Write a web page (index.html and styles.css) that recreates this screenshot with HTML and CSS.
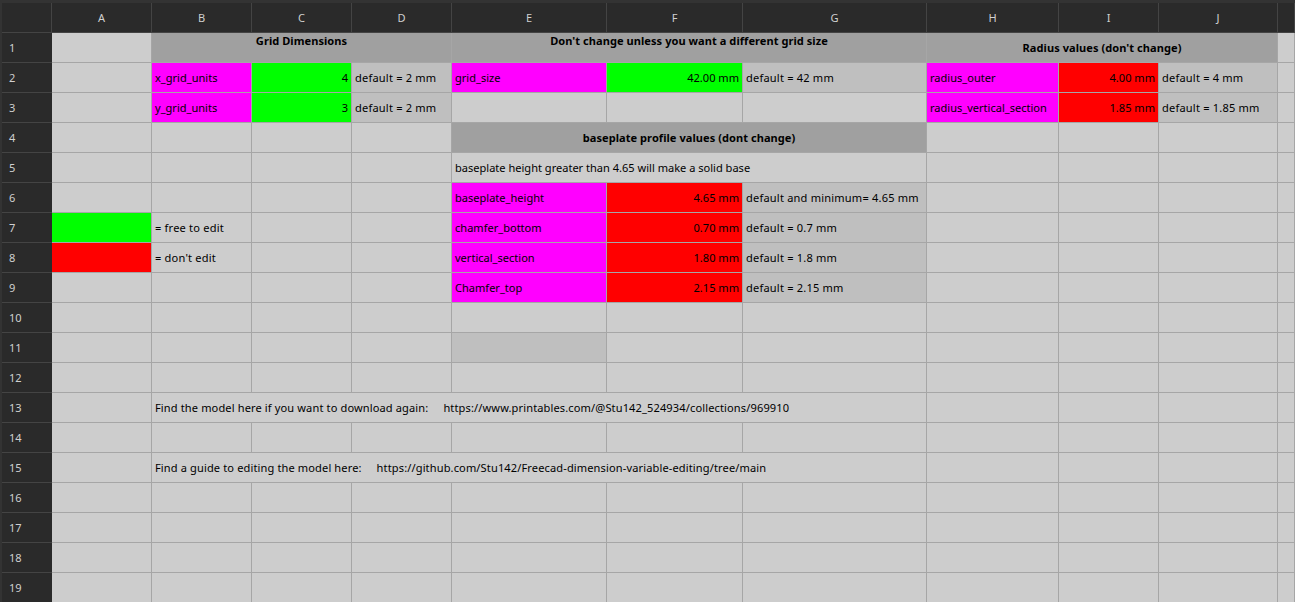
FILE: index.html
```html
<!DOCTYPE html>
<html lang="en">
<head>
<meta charset="utf-8">
<title>Spreadsheet</title>
<link rel="stylesheet" href="styles.css">
</head>
<body>
<div class="sheet">
<table class="grid">
<colgroup>
<col class="w-head"><col class="w-100"><col class="w-100"><col class="w-100"><col class="w-100"><col class="w-e"><col class="w-f"><col class="w-g"><col class="w-h"><col class="w-100"><col class="w-j"><col class="w-k">
</colgroup>
<thead>
<tr><th class="corner"></th><th>A</th><th>B</th><th>C</th><th>D</th><th>E</th><th>F</th><th>G</th><th>H</th><th>I</th><th>J</th><th></th></tr>
</thead>
<tbody>
<tr><th>1</th><td></td><td colspan="3" class="title top">Grid Dimensions</td><td colspan="3" class="title top">Don't change unless you want a different grid size</td><td colspan="3" class="title">Radius values (don't change)</td><td></td></tr>
<tr><th>2</th><td></td><td class="name">x_grid_units</td><td class="free num">4</td><td class="note">default = 2 mm</td><td class="name">grid_size</td><td class="free num">42.00 mm</td><td class="note">default = 42 mm</td><td class="name">radius_outer</td><td class="lock num">4.00 mm</td><td class="note">default = 4 mm</td><td></td></tr>
<tr><th>3</th><td></td><td class="name">y_grid_units</td><td class="free num">3</td><td class="note">default = 2 mm</td><td></td><td></td><td></td><td class="name">radius_vertical_section</td><td class="lock num">1.85 mm</td><td class="note">default = 1.85 mm</td><td></td></tr>
<tr><th>4</th><td></td><td></td><td></td><td></td><td colspan="3" class="title">baseplate profile values (dont change)</td><td></td><td></td><td></td><td></td></tr>
<tr><th>5</th><td></td><td></td><td></td><td></td><td colspan="3">baseplate height greater than 4.65 will make a solid base</td><td></td><td></td><td></td><td></td></tr>
<tr><th>6</th><td></td><td></td><td></td><td></td><td class="name">baseplate_height</td><td class="lock num">4.65 mm</td><td class="note">default and minimum= 4.65 mm</td><td></td><td></td><td></td><td></td></tr>
<tr><th>7</th><td class="free"></td><td class="legend">= free to edit</td><td></td><td></td><td class="name">chamfer_bottom</td><td class="lock num">0.70 mm</td><td class="note">default = 0.7 mm</td><td></td><td></td><td></td><td></td></tr>
<tr><th>8</th><td class="lock"></td><td class="legend">= don't edit</td><td></td><td></td><td class="name">vertical_section</td><td class="lock num">1.80 mm</td><td class="note">default = 1.8 mm</td><td></td><td></td><td></td><td></td></tr>
<tr><th>9</th><td></td><td></td><td></td><td></td><td class="name">Chamfer_top</td><td class="lock num">2.15 mm</td><td class="note">default = 2.15 mm</td><td></td><td></td><td></td><td></td></tr>
<tr><th>10</th><td></td><td></td><td></td><td></td><td></td><td></td><td></td><td></td><td></td><td></td><td></td></tr>
<tr><th>11</th><td></td><td></td><td></td><td></td><td class="note"></td><td></td><td></td><td></td><td></td><td></td><td></td></tr>
<tr><th>12</th><td></td><td></td><td></td><td></td><td></td><td></td><td></td><td></td><td></td><td></td><td></td></tr>
<tr><th>13</th><td></td><td colspan="6" class="pre">Find the model here if you want to download again:     https://www.printables.com/@Stu142_524934/collections/969910</td><td></td><td></td><td></td><td></td></tr>
<tr><th>14</th><td></td><td></td><td></td><td></td><td></td><td></td><td></td><td></td><td></td><td></td><td></td></tr>
<tr><th>15</th><td></td><td colspan="6" class="pre">Find a guide to editing the model here:     https://github.com/Stu142/Freecad-dimension-variable-editing/tree/main</td><td></td><td></td><td></td><td></td></tr>
<tr><th>16</th><td></td><td></td><td></td><td></td><td></td><td></td><td></td><td></td><td></td><td></td><td></td></tr>
<tr><th>17</th><td></td><td></td><td></td><td></td><td></td><td></td><td></td><td></td><td></td><td></td><td></td></tr>
<tr><th>18</th><td></td><td></td><td></td><td></td><td></td><td></td><td></td><td></td><td></td><td></td><td></td></tr>
<tr><th>19</th><td></td><td></td><td></td><td></td><td></td><td></td><td></td><td></td><td></td><td></td><td></td></tr>
</tbody>
</table>
</div>
</body>
</html>
```
FILE: styles.css
```css
* { box-sizing: border-box; }
html, body { margin: 0; height: 100%; overflow: hidden; background: #333333; }
.sheet { padding: 3px 0 0 2px; height: 602px; overflow: hidden; }
.grid {
  table-layout: fixed;
  border-collapse: separate;
  border-spacing: 0;
  width: 1293px;
  font: 11.06px/16px "Noto Sans", sans-serif;
  color: #000;
}
.w-head { width: 50px; }
.w-100 { width: 100px; }
.w-e { width: 155px; }
.w-f { width: 136px; }
.w-g { width: 184px; }
.w-h { width: 132px; }
.w-j { width: 119px; }
.w-k { width: 17px; }
tr { height: 30px; }
th {
  background: #2a2a2a;
  color: #d0d0d0;
  font-weight: 400;
  padding: 0;
  border-right: 1px solid #444444;
  border-bottom: 1px solid #444444;
}
tbody th { text-align: left; padding-left: 7px; border-right: 0; width: 50px; }
td {
  background: #cdcdcd;
  padding: 0 3px;
  border-right: 1px solid #a6a6a6;
  border-bottom: 1px solid #a6a6a6;
  white-space: nowrap;
  overflow: hidden;
}
.title { background: #a0a0a0; font-weight: 700; text-align: center; letter-spacing: 0.05px; }
.top { vertical-align: top; }
.name { background: #ff00ff; }
.free { background: #00ff00; }
.lock { background: #ff0000; }
.num { text-align: right; }
.note { background: #bfbfbf; letter-spacing: 0.2px; }
.legend { letter-spacing: 0.2px; }
.pre { white-space: pre; letter-spacing: 0.13px; }
```
